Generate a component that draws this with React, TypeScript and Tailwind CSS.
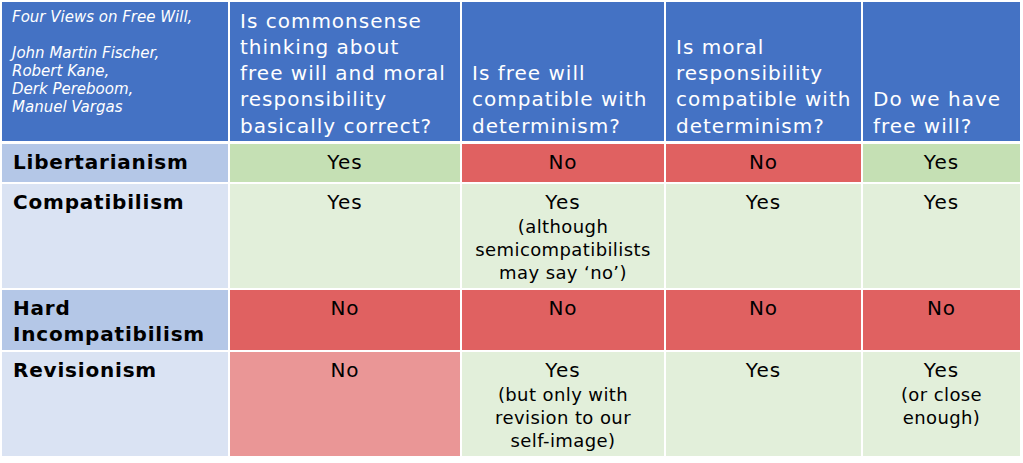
const headers = [
  ["Is commonsense", "thinking about", "free will and moral", "responsibility", "basically correct?"],
  ["Is free will", "compatible with", "determinism?"],
  ["Is moral", "responsibility", "compatible with", "determinism?"],
  ["Do we have", "free will?"],
];

type Cell = { main: string; note?: string[]; tone: "green" | "paleGreen" | "red" | "paleRed" };
type Row = { label: string[]; dark: boolean; height: string; cells: Cell[] };

const rows: Row[] = [
  {
    label: ["Libertarianism"],
    dark: true,
    height: "h-[38px]",
    cells: [
      { main: "Yes", tone: "green" },
      { main: "No", tone: "red" },
      { main: "No", tone: "red" },
      { main: "Yes", tone: "green" },
    ],
  },
  {
    label: ["Compatibilism"],
    dark: false,
    height: "h-[104px]",
    cells: [
      { main: "Yes", tone: "paleGreen" },
      { main: "Yes", note: ["(although", "semicompatibilists", "may say \u2018no\u2019)"], tone: "paleGreen" },
      { main: "Yes", tone: "paleGreen" },
      { main: "Yes", tone: "paleGreen" },
    ],
  },
  {
    label: ["Hard", "Incompatibilism"],
    dark: true,
    height: "h-[60px]",
    cells: [
      { main: "No", tone: "red" },
      { main: "No", tone: "red" },
      { main: "No", tone: "red" },
      { main: "No", tone: "red" },
    ],
  },
  {
    label: ["Revisionism"],
    dark: false,
    height: "h-[104px]",
    cells: [
      { main: "No", tone: "paleRed" },
      { main: "Yes", note: ["(but only with", "revision to our", "self-image)"], tone: "paleGreen" },
      { main: "Yes", tone: "paleGreen" },
      { main: "Yes", note: ["(or close", "enough)"], tone: "paleGreen" },
    ],
  },
];

const toneClass = {
  green: "bg-[#c5e0b4]",
  paleGreen: "bg-[#e2efda]",
  red: "bg-[#e06161]",
  paleRed: "bg-[#ea9696]",
};

export default function App() {
  return (
    <div className="w-[1023px] h-[463px] bg-white pt-[2px] pl-[2px] font-['DejaVu_Sans',sans-serif] text-black">
      <div className="w-[1018px] grid grid-cols-[226px_230px_202px_195px_157px] gap-x-[2px]">
        {/* Header */}
        <div className="h-[139px] bg-[#4472c4] text-white italic text-[15px] leading-[18px] pl-[10px] pt-[6px]">
          <p>Four Views on Free Will,</p>
          <p className="mt-[18px]">John Martin Fischer,</p>
          <p>Robert Kane,</p>
          <p>Derk Pereboom,</p>
          <p>Manuel Vargas</p>
        </div>
        {headers.map((lines) => (
          <div
            key={lines.join(" ")}
            className="h-[139px] bg-[#4472c4] text-white text-[20px] leading-[26.3px] tracking-[1px] whitespace-nowrap pl-[10px] pb-[2px] flex flex-col justify-end"
          >
            {lines.map((l) => (
              <p key={l}>{l}</p>
            ))}
          </div>
        ))}
      </div>

      <div className="w-[1018px] mt-[3px] flex flex-col gap-y-[2px]">
        {rows.map((row) => (
          <div key={row.label.join(" ")} className="grid grid-cols-[226px_230px_202px_195px_157px] gap-x-[2px]">
            <div
              className={`${row.height} ${row.dark ? "bg-[#b4c7e7]" : "bg-[#dae3f3]"} pl-[11px] pt-[5px] font-bold text-[20px] leading-[26px] tracking-[0.8px]`}
            >
              {row.label.map((l) => (
                <p key={l}>{l}</p>
              ))}
            </div>
            {row.cells.map((c, i) => (
              <div key={i} className={`${row.height} ${toneClass[c.tone]} pt-[5px] text-center`}>
                <p className="text-[20px] leading-[26px] tracking-[1px]">{c.main}</p>
                {c.note && (
                  <div className="text-[18px] leading-[23px] tracking-[0.4px]">
                    {c.note.map((n) => (
                      <p key={n}>{n}</p>
                    ))}
                  </div>
                )}
              </div>
            ))}
          </div>
        ))}
      </div>
    </div>
  );
}
